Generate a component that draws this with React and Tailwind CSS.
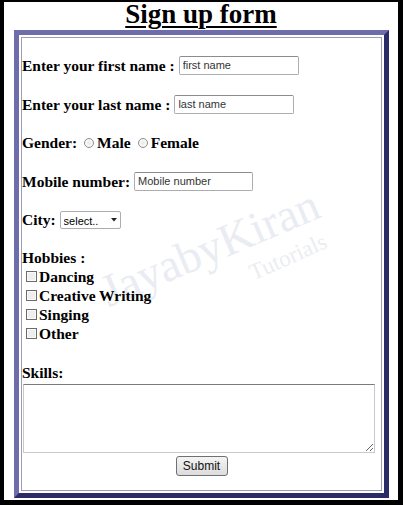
const serif = { fontFamily: '"Liberation Serif", "Times New Roman", serif' };

function TextInput({ placeholder, width }) {
  return (
    <input
      type="text"
      placeholder={placeholder}
      className={`${width} h-[19px] ml-[4px] px-[3px] border border-[#abadb3] border-t-[#8a8c92] rounded-[2px] bg-white text-[11px] font-normal text-[#222] placeholder:text-[#333] font-['Liberation_Sans',Arial,sans-serif] outline-none`}
    />
  );
}

function Radio({ label }) {
  return (
    <label className="flex items-center">
      <input
        type="radio"
        name="gender"
        className="appearance-none w-[10px] h-[10px] rounded-full border border-[#8f8f8f] bg-[#ececec] ml-[7px] mr-[3px] shadow-[inset_0_0_0_2px_#f8f8f8]"
      />
      {label}
    </label>
  );
}

function Hobby({ label }) {
  return (
    <label className="flex items-center h-[19px]">
      <input
        type="checkbox"
        className="appearance-none w-[11px] h-[11px] border border-[#6b6b6b] bg-[#eeeeee] ml-[4px] mr-[2px] shadow-[inset_0_0_0_1px_#fafafa]"
      />
      {label}
    </label>
  );
}

export default function App() {
  return (
    <div className="w-[403px] h-[505px] bg-black pl-1 pt-0.5 pr-[5px] pb-[5px]">
      <div className="h-full bg-white text-black" style={serif}>
        <h1 className="text-center text-[27px] leading-[24px] font-bold underline decoration-2 underline-offset-[3px] mb-1">
          Sign up form
        </h1>

        <div className="ml-[10px] w-[375px] border-[5px] border-t-[#6d6dab] border-l-[#6d6dab] border-r-[#2b2b68] border-b-[#2b2b68] p-[2px] bg-white">
          <div className="relative border border-[#9c9cb4] pb-[14px]">
            {/* watermark */}
            <div className="absolute left-[188px] top-[210px] w-0 h-0 pointer-events-none select-none">
              <span className="absolute -translate-x-1/2 -translate-y-1/2 rotate-[-23deg] whitespace-nowrap text-[46px] leading-none text-[#e9ecf2]">
                JayabyKiran
              </span>
            </div>
            <div className="absolute left-[266px] top-[219px] w-0 h-0 pointer-events-none select-none">
              <span className="absolute -translate-x-1/2 -translate-y-1/2 rotate-[-24deg] whitespace-nowrap text-[23px] leading-none text-[#ebedf2]">
                Tutorials
              </span>
            </div>

            <form className="relative text-[15.5px] leading-[19px] font-bold">
              <div className="flex items-center h-[19px] mt-[18px]">
                <span>Enter your first name :</span>
                <TextInput placeholder="first name" width="w-[120px]" />
              </div>

              <div className="flex items-center h-[19px] mt-[20px]">
                <span>Enter your last name :</span>
                <TextInput placeholder="last name" width="w-[120px]" />
              </div>

              <div className="flex items-center h-[19px] mt-[19px]">
                <span>Gender:</span>
                <Radio label="Male" />
                <Radio label="Female" />
              </div>

              <div className="flex items-center h-[19px] mt-[20px]">
                <span>Mobile number:</span>
                <TextInput placeholder="Mobile number" width="w-[119px]" />
              </div>

              <div className="flex items-center h-[19px] mt-[19px]">
                <span>City:</span>
                <div className="relative ml-[4px]">
                  <select className="appearance-none w-[61px] h-[18px] pl-[3px] border border-[#abadb3] rounded-[2px] bg-white text-[11px] font-normal font-['Liberation_Sans',Arial,sans-serif] outline-none">
                    <option>select..</option>
                    <option>Pune</option>
                    <option>Mumbai</option>
                  </select>
                  <svg
                    className="absolute right-[4px] top-[8px] pointer-events-none"
                    width="6"
                    height="4"
                    viewBox="0 0 6 4"
                  >
                    <path d="M0 0h6L3 3.5z" fill="#222" />
                  </svg>
                </div>
              </div>

              <div className="h-[19px] mt-[19px]">Hobbies :</div>
              <Hobby label="Dancing" />
              <Hobby label="Creative Writing" />
              <Hobby label="Singing" />
              <Hobby label="Other" />

              <div className="h-[19px] mt-[20px]">Skills:</div>
              <textarea className="block mt-[2px] ml-px w-[352px] h-[69px] border border-[#c8c8c8] border-t-[#7a7a7a] outline-none resize" />

              <div className="flex justify-center mt-[3px]">
                <button
                  type="button"
                  className="w-[52px] h-[20px] rounded-[3px] border border-[#707070] bg-gradient-to-b from-[#f4f4f4] to-[#dcdcdc] text-[12px] font-normal text-[#111] font-['Liberation_Sans',Arial,sans-serif]"
                >
                  Submit
                </button>
              </div>
            </form>
          </div>
        </div>
      </div>
    </div>
  );
}
